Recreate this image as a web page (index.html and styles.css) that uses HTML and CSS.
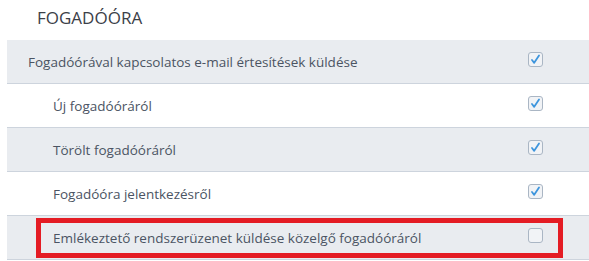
FILE: index.html
```html
<!DOCTYPE html>
<html lang="hu">
<head>
<meta charset="utf-8">
<link rel="stylesheet" href="styles.css">
</head>
<body>
<h2 class="title">FOGADÓÓRA</h2>
<div class="table">
  <div class="row shaded">
    <span class="label">Fogadóórával kapcsolatos e-mail értesítések küldése</span>
    <span class="cb checked"><svg viewBox="0 0 14 14"><path d="M3.2 7.6 L5.6 10.6 L10.8 2.6" fill="none" stroke="#3d95dd" stroke-width="1.9" stroke-linecap="round" stroke-linejoin="round"/></svg></span>
  </div>
  <div class="row sub">
    <span class="label">Új fogadóóráról</span>
    <span class="cb checked"><svg viewBox="0 0 14 14"><path d="M3.2 7.6 L5.6 10.6 L10.8 2.6" fill="none" stroke="#3d95dd" stroke-width="1.9" stroke-linecap="round" stroke-linejoin="round"/></svg></span>
  </div>
  <div class="row sub shaded">
    <span class="label">Törölt fogadóóráról</span>
    <span class="cb checked"><svg viewBox="0 0 14 14"><path d="M3.2 7.6 L5.6 10.6 L10.8 2.6" fill="none" stroke="#3d95dd" stroke-width="1.9" stroke-linecap="round" stroke-linejoin="round"/></svg></span>
  </div>
  <div class="row sub">
    <span class="label">Fogadóóra jelentkezésről</span>
    <span class="cb checked"><svg viewBox="0 0 14 14"><path d="M3.2 7.6 L5.6 10.6 L10.8 2.6" fill="none" stroke="#3d95dd" stroke-width="1.9" stroke-linecap="round" stroke-linejoin="round"/></svg></span>
  </div>
  <div class="row sub shaded highlighted">
    <span class="label">Emlékeztető rendszerüzenet küldése közelgő fogadóóráról</span>
    <span class="cb"></span>
    <span class="marker"></span>
  </div>
</div>
</body>
</html>
```
FILE: styles.css
```css
html, body {
  margin: 0;
  padding: 0;
  background: #ffffff;
}
body {
  font-family: "Open Sans", "Liberation Sans", sans-serif;
  color: #4b5463;
}
.title {
  margin: 0;
  padding: 6px 0 0 37px;
  height: 40px;
  box-sizing: border-box;
  font-size: 17px;
  font-weight: 400;
  color: #3b4048;
  line-height: 24px;
}
.table {
  margin-left: 7px;
}
.row {
  position: relative;
  display: flex;
  align-items: center;
  height: 43px;
  border-bottom: 1px solid #cdd4dd;
  padding-left: 21px;
  padding-right: 46px;
  font-size: 13.5px;
}
.row.sub {
  padding-left: 46px;
}
.shaded {
  background: #e9ecf0;
}
.label {
  flex: 1;
}
.cb {
  width: 13px;
  height: 13px;
  border: 1px solid #aab6c4;
  border-radius: 3px;
  background: #f1f3f6;
  margin-top: -4px;
  display: flex;
}
.cb svg {
  width: 13px;
  height: 13px;
}
.marker {
  position: absolute;
  left: 29px;
  top: 2px;
  width: 527px;
  height: 40px;
  box-sizing: border-box;
  border: 5px solid #e41c24;
}
```
